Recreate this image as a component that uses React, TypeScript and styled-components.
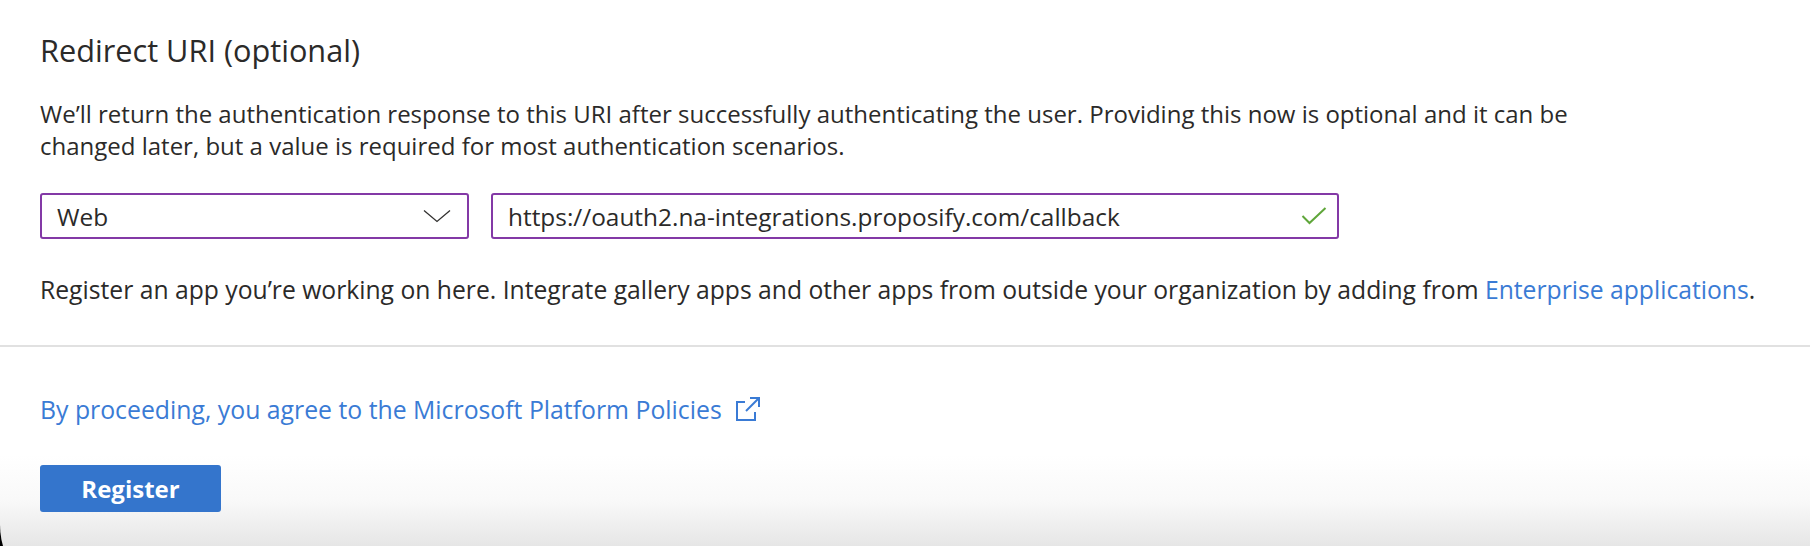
import React from "react";
import styled, { createGlobalStyle } from "styled-components";

const GlobalStyle = createGlobalStyle`
  html, body {
    margin: 0;
    padding: 0;
    background: #000;
    overflow: hidden;
  }
  * { box-sizing: border-box; }
`;

const Panel = styled.div`
  height: 600px;
  border-bottom-left-radius: 75px;
  background: linear-gradient(
    to bottom,
    #ffffff 0px,
    #ffffff 455px,
    #f9f9f9 500px,
    #e6e6e6 546px,
    #e0e0e0 600px
  );
  font-family: "Open Sans", "Noto Sans", sans-serif;
  color: #2b2a29;
`;

const Section = styled.section`
  padding: 32px 40px 0;
`;

const Title = styled.h2`
  margin: 0;
  font-size: 30.7px;
  line-height: 36px;
  font-weight: 400;
  color: #2b2a29;
`;

const Text = styled.p<{ $top: number; $size: number }>`
  margin: ${(p) => p.$top}px 0 0;
  font-size: ${(p) => p.$size}px;
  line-height: 32px;
  color: #2b2a29;
  white-space: nowrap;
`;

const FieldRow = styled.div`
  margin-top: 31px;
  display: flex;
  gap: 22px;
`;

const Box = styled.div<{ $width: number; $right: number }>`
  width: ${(p) => p.$width}px;
  height: 46px;
  border: 2px solid #8339a6;
  border-radius: 3px;
  display: flex;
  align-items: center;
  justify-content: space-between;
  padding: 0 ${(p) => p.$right}px 0 15px;
  font-size: 24.4px;
  color: #2b2a29;
  background: #fff;
`;

const Link = styled.a`
  color: #3a7bd5;
  text-decoration: none;
`;

const Divider = styled.hr`
  margin: 39px 0 0;
  border: 0;
  height: 2px;
  background: #e1e1e1;
`;

const Footer = styled.div`
  padding: 46px 40px 0;
`;

const PolicyLink = styled.a`
  display: inline-flex;
  align-items: center;
  gap: 12px;
  font-size: 24.8px;
  line-height: 32px;
  color: #3a7bd5;
  text-decoration: none;
`;

const RegisterButton = styled.button`
  display: block;
  margin-top: 40px;
  width: 181px;
  height: 47px;
  border: 0;
  border-radius: 3px;
  background: #3475cc;
  color: #fff;
  font-family: "Open Sans", "Noto Sans", sans-serif;
  font-weight: 700;
  font-size: 24px;
  cursor: pointer;
`;

const Chevron = () => (
  <svg width="28" height="14" viewBox="0 0 28 14" fill="none">
    <path d="M1 1.5L14 12.5L27 1.5" stroke="#323130" strokeWidth="1.3" />
  </svg>
);

const Check = () => (
  <svg width="26" height="18" viewBox="0 0 26 18" fill="none">
    <path d="M1.5 9L8.5 16L24.5 1" stroke="#5fa63a" strokeWidth="2" />
  </svg>
);

const ExternalIcon = () => (
  <svg width="28" height="26" viewBox="0 0 28 26" fill="none" stroke="#3a7bd5" strokeWidth="2">
    <path d="M11 6H3v18h18v-8" />
    <path d="M16 2h9v9" />
    <path d="M25 2L12 15" />
  </svg>
);

export default function App() {
  return (
    <>
      <GlobalStyle />
      <Panel>
        <Section>
          <Title>Redirect URI (optional)</Title>
          <Text $top={30} $size={24}>
            We’ll return the authentication response to this URI after successfully authenticating the user. Providing this now is optional and it can be
            <br />
            changed later, but a value is required for most authentication scenarios.
          </Text>
          <FieldRow>
            <Box $width={429} $right={16}>
              <span>Web</span>
              <Chevron />
            </Box>
            <Box $width={848} $right={10}>
              <span>https://oauth2.na-integrations.proposify.com/callback</span>
              <Check />
            </Box>
          </FieldRow>
          <Text $top={35} $size={24.7}>
            Register an app you’re working on here. Integrate gallery apps and other apps from outside your organization by adding from{" "}
            <Link href="#">Enterprise applications</Link>.
          </Text>
        </Section>
        <Divider />
        <Footer>
          <PolicyLink href="#">
            By proceeding, you agree to the Microsoft Platform Policies
            <ExternalIcon />
          </PolicyLink>
          <RegisterButton>Register</RegisterButton>
        </Footer>
      </Panel>
    </>
  );
}
